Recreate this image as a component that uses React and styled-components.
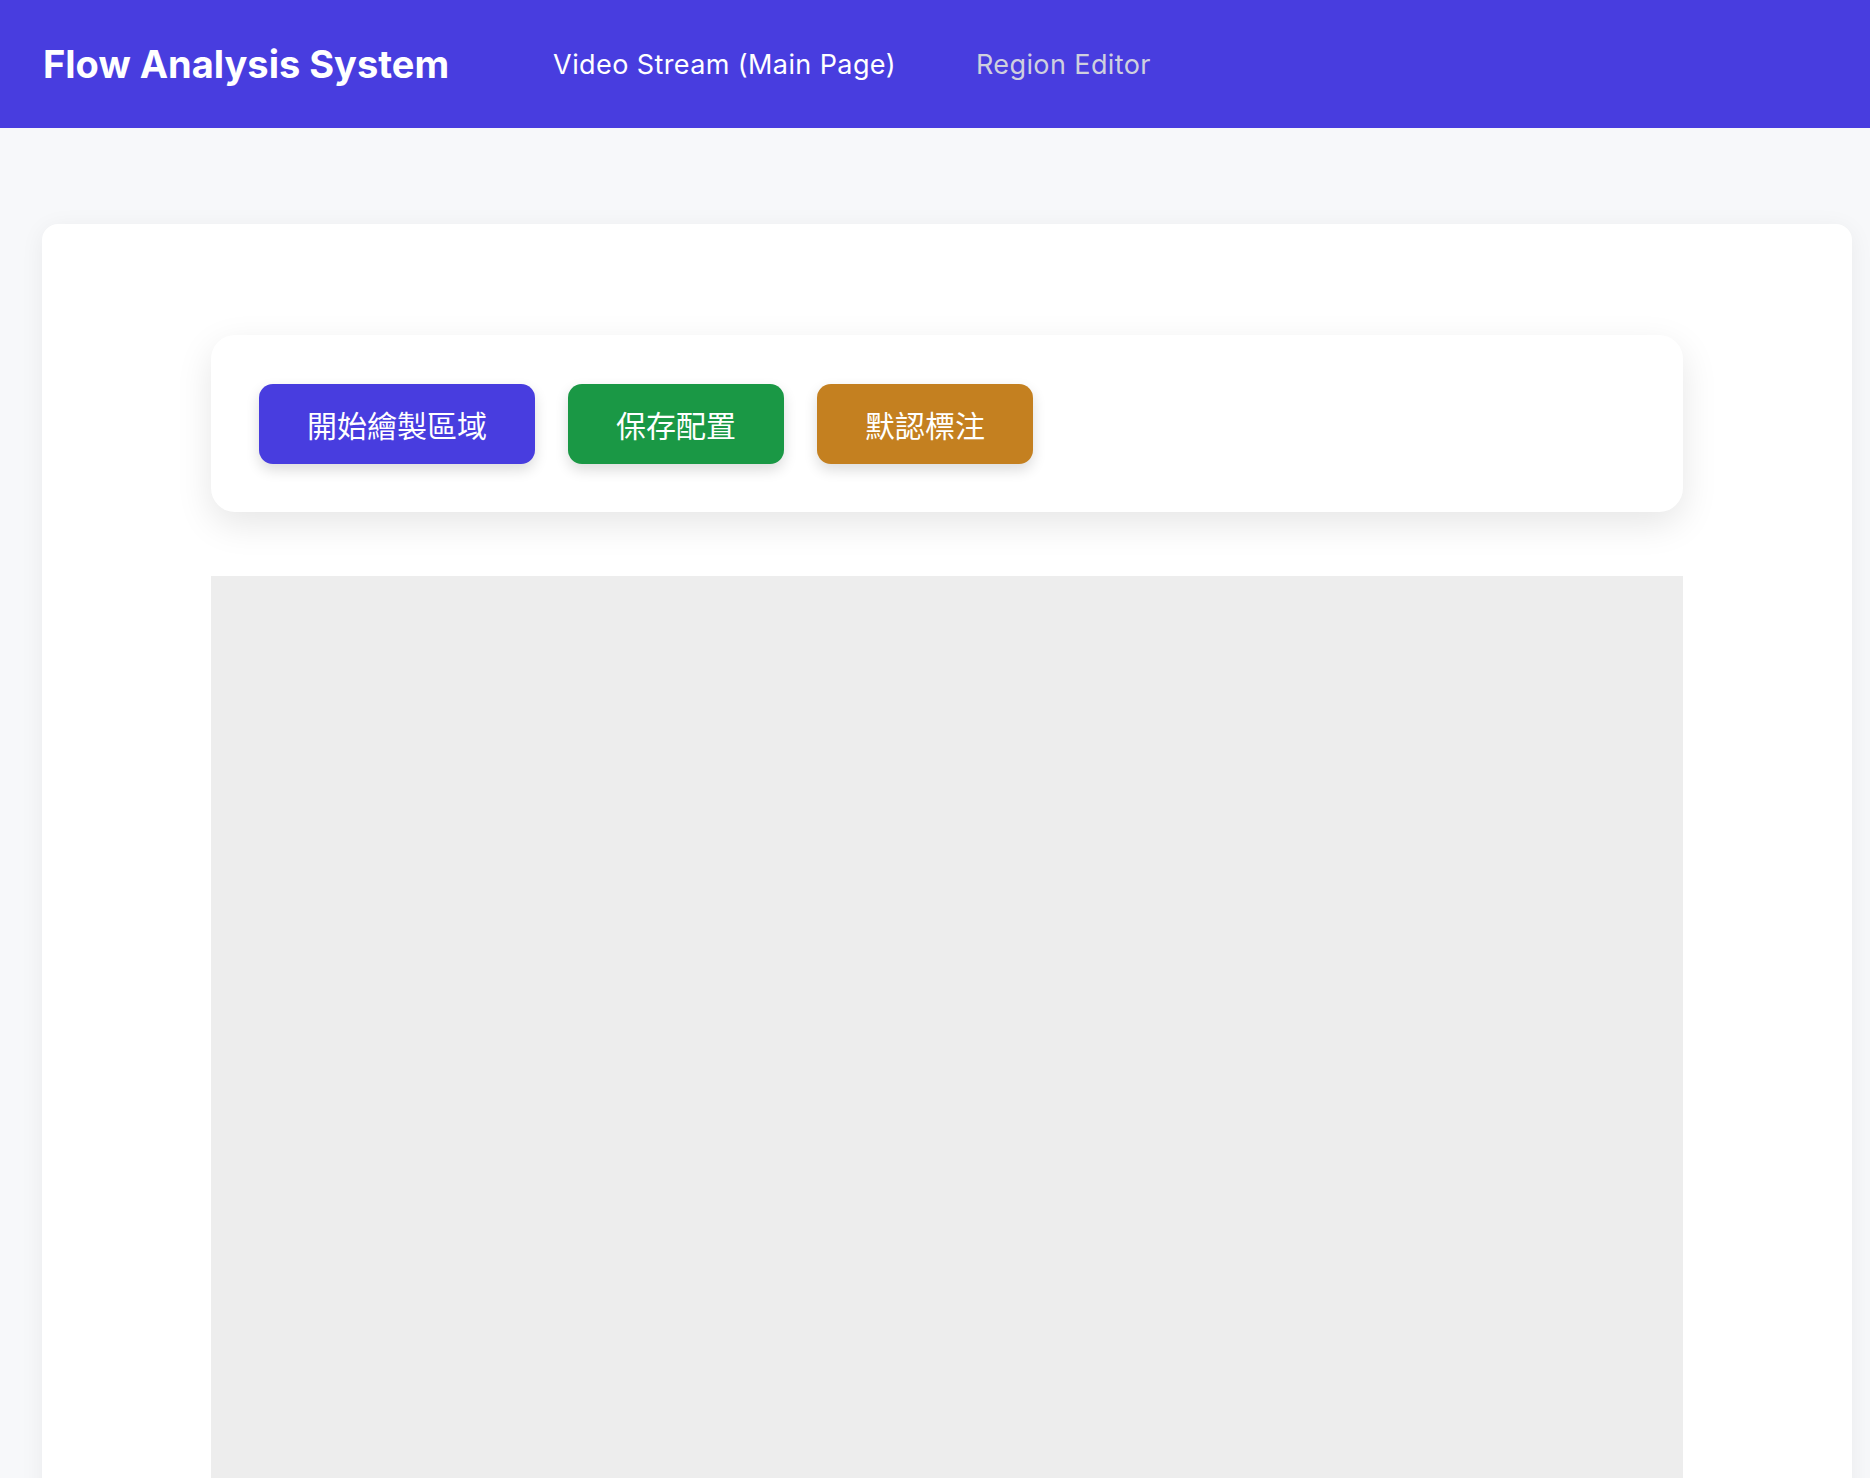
import React from 'react';
import styled, { createGlobalStyle } from 'styled-components';

const GlobalStyle = createGlobalStyle`
  html, body {
    margin: 0;
    padding: 0;
    background: #f7f8fa;
    font-family: Inter, "Noto Sans", "Noto Sans CJK TC", sans-serif;
  }
  * {
    box-sizing: border-box;
  }
`;

const Header = styled.header`
  height: 128px;
  background-color: #483ddf;
  display: flex;
  align-items: center;
  padding-left: 43px;
`;

const Brand = styled.h1`
  margin: 0;
  color: #fff;
  font-size: 38px;
  font-weight: 700;
  letter-spacing: 0;
`;

const Nav = styled.nav`
  display: flex;
  align-items: center;
  gap: 80px;
  margin-left: 104px;
`;

const NavLink = styled.a`
  color: ${(p) => (p.$active ? '#ffffff' : '#cfd0de')};
  font-size: 27px;
  font-weight: 400;
  letter-spacing: 0.4px;
  text-decoration: none;
  cursor: pointer;
`;

const Main = styled.main`
  padding: 96px 18px 0 42px;
`;

const Card = styled.section`
  background: #fff;
  border-radius: 16px;
  padding: 111px 169px 0;
  box-shadow: 0 4px 24px rgba(15, 23, 42, 0.06);
`;

const Toolbar = styled.div`
  display: flex;
  align-items: center;
  gap: 33px;
  padding: 49px 48px 48px;
  background: #fff;
  border-radius: 24px;
  box-shadow: 0 12px 36px rgba(0, 0, 0, 0.1);
`;

const Button = styled.button`
  height: 80px;
  padding: 0 48px;
  border: none;
  border-radius: 14px;
  background-color: ${(p) => p.$color};
  color: #fff;
  font-family: "Noto Sans CJK TC", "Noto Sans CJK SC", sans-serif;
  font-size: 30px;
  font-weight: 400;
  cursor: pointer;
  box-shadow: 0 6px 14px rgba(0, 0, 0, 0.14);
`;

const Canvas = styled.div`
  margin-top: 64px;
  height: 980px;
  background: #ededed;
`;

const buttons = [
  { label: '開始繪製區域', color: '#483ddf' },
  { label: '保存配置', color: '#1a9845' },
  { label: '默認標注', color: '#c48020' },
];

export default function App() {
  return (
    <>
      <GlobalStyle />
      <Header>
        <Brand>Flow Analysis System</Brand>
        <Nav>
          <NavLink $active>Video Stream (Main Page)</NavLink>
          <NavLink>Region Editor</NavLink>
        </Nav>
      </Header>
      <Main>
        <Card>
          <Toolbar>
            {buttons.map((b) => (
              <Button key={b.label} $color={b.color}>
                {b.label}
              </Button>
            ))}
          </Toolbar>
          <Canvas />
        </Card>
      </Main>
    </>
  );
}
